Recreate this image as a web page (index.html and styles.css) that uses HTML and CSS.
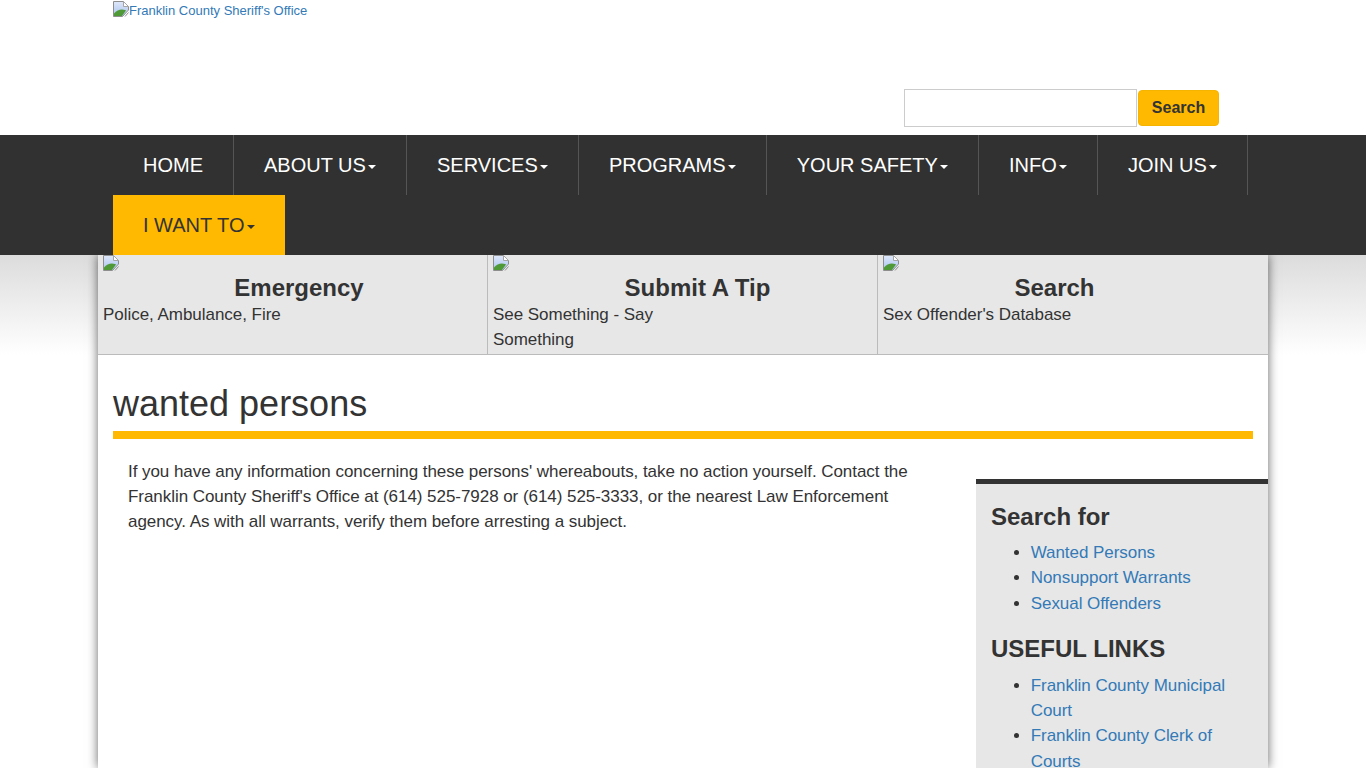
FILE: index.html
```html
<!DOCTYPE html>
<html lang="en">
<head>
<meta charset="utf-8">
<title>wanted persons</title>
<link rel="stylesheet" href="styles.css">
</head>
<body>
<svg class="defs" aria-hidden="true"><defs>
  <linearGradient id="sky" x1="0" y1="0" x2="0" y2="1"><stop offset="0" stop-color="#dfe8fa"/><stop offset="1" stop-color="#a9c3ee"/></linearGradient>
  <symbol id="broken" viewBox="0 0 16 16">
    <path d="M.5.5h10l5 5v3.500l-6 6.500H.5z" fill="url(#sky)" stroke="#8e8e8e"/>
    <path d="M10.500.5v5h5z" fill="#fff" stroke="#a5a5a5"/>
    <path d="M1 15v-2.500c3-3.500 7-5 11-3.500l1 .5-4 5.500z" fill="#4f9a36"/>
    <path d="M12 15.500l3.500-4" stroke="#8e8e8e" fill="none"/>
  </symbol>
</defs></svg>
<header class="top">
  <div class="wrap top-inner">
    <a class="logo" href="#"><svg class="broken"><use href="#broken"/></svg>Franklin County Sheriff's Office</a>
    <form class="search"><input class="search-input" type="text"><button class="search-btn" type="button">Search</button></form>
  </div>
</header>
<nav class="nav">
  <ul class="wrap nav-list">
    <li class="nav-item"><a href="#">HOME</a></li>
    <li class="nav-item"><a href="#">ABOUT US<b class="caret"></b></a></li>
    <li class="nav-item"><a href="#">SERVICES<b class="caret"></b></a></li>
    <li class="nav-item"><a href="#">PROGRAMS<b class="caret"></b></a></li>
    <li class="nav-item"><a href="#">YOUR SAFETY<b class="caret"></b></a></li>
    <li class="nav-item"><a href="#">INFO<b class="caret"></b></a></li>
    <li class="nav-item"><a href="#">JOIN US<b class="caret"></b></a></li>
    <li class="nav-item nav-cta"><a href="#">I WANT TO<b class="caret"></b></a></li>
  </ul>
</nav>
<div class="stage">
  <main class="page">
    <section class="tiles">
      <div class="tile tile-a">
        <svg class="broken tile-img"><use href="#broken"/></svg>
        <h3 class="tile-title">Emergency</h3>
        <p class="tile-text">Police, Ambulance, Fire</p>
      </div>
      <div class="tile tile-b">
        <svg class="broken tile-img"><use href="#broken"/></svg>
        <h3 class="tile-title">Submit A Tip</h3>
        <p class="tile-text">See Something - Say Something</p>
      </div>
      <div class="tile tile-c">
        <svg class="broken tile-img"><use href="#broken"/></svg>
        <h3 class="tile-title">Search</h3>
        <p class="tile-text">Sex Offender's Database</p>
      </div>
    </section>
    <h1 class="title">wanted persons</h1>
    <div class="columns">
      <div class="body-text">
        <p>If you have any information concerning these persons' whereabouts, take no action yourself. Contact the Franklin County Sheriff's Office at (614) 525-7928 or (614) 525-3333, or the nearest Law Enforcement agency. As with all warrants, verify them before arresting a subject.</p>
      </div>
      <aside class="side">
        <h3 class="side-title">Search for</h3>
        <ul class="side-list">
          <li><a href="#">Wanted Persons</a></li>
          <li><a href="#">Nonsupport Warrants</a></li>
          <li><a href="#">Sexual Offenders</a></li>
        </ul>
        <h3 class="side-title side-title-next">USEFUL LINKS</h3>
        <ul class="side-list">
          <li><a href="#">Franklin County Municipal Court</a></li>
          <li><a href="#">Franklin County Clerk of Courts</a></li>
        </ul>
      </aside>
    </div>
  </main>
</div>
</body>
</html>
```
FILE: styles.css
```css
* { box-sizing: border-box; }
html, body { height: 768px; overflow: hidden; }
body { margin: 0; background: #fff; color: #333; font-family: "Liberation Sans", Arial, sans-serif; font-size: 17px; line-height: 25px; }
a { color: #337ab7; text-decoration: none; }
.defs { position: absolute; width: 0; height: 0; }
.wrap { width: 1170px; margin: 0 auto; }
.top { height: 135px; }
.top-inner { height: 135px; padding: 0 15px; display: flex; flex-direction: column; justify-content: space-between; }
.logo { display: flex; align-items: flex-start; font-size: 13px; line-height: 21px; }
.broken { width: 16px; height: 16px; display: block; flex: none; margin-top: 1px; }
.search { display: flex; justify-content: flex-end; align-items: flex-start; padding: 0 34px 8px 0; gap: 1px; }
.search-input { width: 233px; height: 38px; border: 1px solid #ccc; background: #fff; padding: 6px 12px; }
.search-btn { width: 81px; height: 36px; margin-top: 1px; border: 1px solid #f5b400; border-radius: 4px; background: #ffb900; color: #333; font: bold 16px/22px "Liberation Sans", Arial, sans-serif; padding: 0; }
.nav { background: #313131; height: 120px; position: relative; z-index: 1; }
.nav-list { list-style: none; margin: 0 auto; padding: 0 15px; display: flex; flex-wrap: wrap; height: 120px; align-content: flex-start; }
.nav-item { border-right: 1px solid #555; height: 60px; }
.nav-item a { display: block; padding: 15px 30px; color: #fff; font-size: 20px; line-height: 30px; }
.nav-cta { background: #ffb900; border-right: 0; }
.nav-cta a { color: #333; }
.caret { display: inline-block; width: 0; height: 0; margin-left: 2.15px; vertical-align: middle; border-top: 4px solid; border-left: 4px solid transparent; border-right: 4px solid transparent; }
.stage { height: 513px; background: linear-gradient(#dcdcdc, #fff 100px); background-repeat: no-repeat; }
.page { width: 1170px; height: 100%; margin: 0 auto; background: #fff; box-shadow: 0 0 10px rgba(0,0,0,.6); overflow: hidden; }
.tiles { display: flex; height: 100px; background: #e7e7e7; border-bottom: 1px solid #bbb; }
.tile { width: 390px; padding: 0 5px; border-right: 1px solid #bbb; }
.tile:last-child { border-right: 0; }
.tile-img { float: left; margin-top: 0; }
.tile-title { margin: 0 0 1px; padding-top: 20px; font-size: 24px; line-height: 26px; font-weight: bold; text-align: center; }
.tile-a .tile-title { padding-left: 13px; }
.tile-b .tile-title { padding-left: 30px; }
.tile-c .tile-title { padding-right: 37px; }
.tile-text { margin: 0; max-width: 200px; letter-spacing: -0.04px; }
.title { margin: 29px 15px 0; padding-bottom: 7px; border-bottom: 8px solid #ffb900; font-size: 36px; line-height: 40px; font-weight: normal; height: 55px; }
.columns { display: flex; justify-content: space-between; align-items: flex-start; }
.body-text { width: 830px; padding: 20px 0 0 30px; letter-spacing: -0.05px; }
.body-text p { margin: 0; }
.side { width: 292px; margin-top: 40px; border-top: 5px solid #333; background: #e7e7e7; padding: 20px 15px 20px; }
.side-title { margin: 0 0 10px; font-size: 24px; line-height: 26px; font-weight: bold; }
.side-title-next { margin: 20px 0 11px; }
.side-list { margin: 0; padding-left: 39.7px; line-height: 25.3px; letter-spacing: -0.05px; }
```
